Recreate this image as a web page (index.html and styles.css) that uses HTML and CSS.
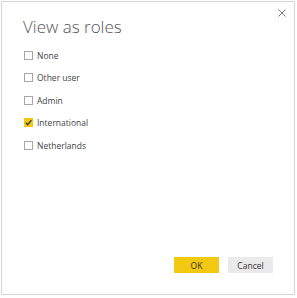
FILE: index.html
```html
<!DOCTYPE html>
<html lang="en">
<head>
    <meta charset="UTF-8">
    <title>View as roles</title>
    <link rel="stylesheet" href="styles.css">
</head>
<body>
    <div class="dialog">
        <button class="close" type="button" aria-label="Close">
            <svg width="8" height="8" viewBox="0 0 8 8"><path d="M0.5 0.5 L7.5 7.5 M7.5 0.5 L0.5 7.5" stroke="#777" stroke-width="1" fill="none"/></svg>
        </button>
        <h1>View as roles</h1>

        <ul class="roles">
            <li class="role"><span class="box"></span>None</li>
            <li class="role"><span class="box"></span>Other user</li>
            <li class="role"><span class="box"></span>Admin</li>
            <li class="role">
                <span class="box checked">
                    <svg width="9" height="9" viewBox="0 0 9 9"><path d="M1.8 4.6 L3.6 6.6 L7.4 2.2" stroke="#3a3a3a" stroke-width="1.4" fill="none"/></svg>
                </span>International
            </li>
            <li class="role"><span class="box"></span>Netherlands</li>
        </ul>

        <div class="footer">
            <button class="btn btn-ok" type="button">OK</button>
            <button class="btn btn-cancel" type="button">Cancel</button>
        </div>
    </div>
</body>
</html>
```

FILE: styles.css
```css
body {
    margin: 0;
    background-color: white;
    font-family: "Open Sans", "Noto Sans", sans-serif;
    color: #333;
}

.dialog {
    position: relative;
    box-sizing: border-box;
    width: 294px;
    height: 294px;
    margin: 1px;
    border: 1px solid #d6d6d6;
    display: flex;
    flex-direction: column;
}

.close {
    position: absolute;
    top: 5px;
    right: 6px;
    padding: 0;
    border: none;
    background: none;
    width: 12px;
    height: 12px;
    display: flex;
    align-items: center;
    justify-content: center;
}

h1 {
    margin: 15px 0 0 21px;
    font-size: 17px;
    font-weight: 300;
    line-height: 20px;
    color: #555;
}

.roles {
    list-style: none;
    margin: 7px 0 0 0;
    padding: 0 0 0 22px;
}

.role {
    display: flex;
    align-items: center;
    height: 22.5px;
    font-size: 8.5px;
    color: #444;
}

.box {
    box-sizing: border-box;
    width: 9px;
    height: 9px;
    border: 1px solid #a6a6a6;
    margin-right: 4px;
    display: flex;
}

.box.checked {
    border: none;
    background-color: #f2c811;
}

.footer {
    margin-top: auto;
    display: flex;
    justify-content: flex-end;
    gap: 9px;
    padding: 0 21px 21px 0;
}

.btn {
    width: 45px;
    height: 16px;
    border: none;
    padding: 0;
    font-family: inherit;
    font-size: 8.5px;
    color: #333;
}

.btn-ok {
    background-color: #f2c811;
}

.btn-cancel {
    background-color: #eaeaea;
}
```
